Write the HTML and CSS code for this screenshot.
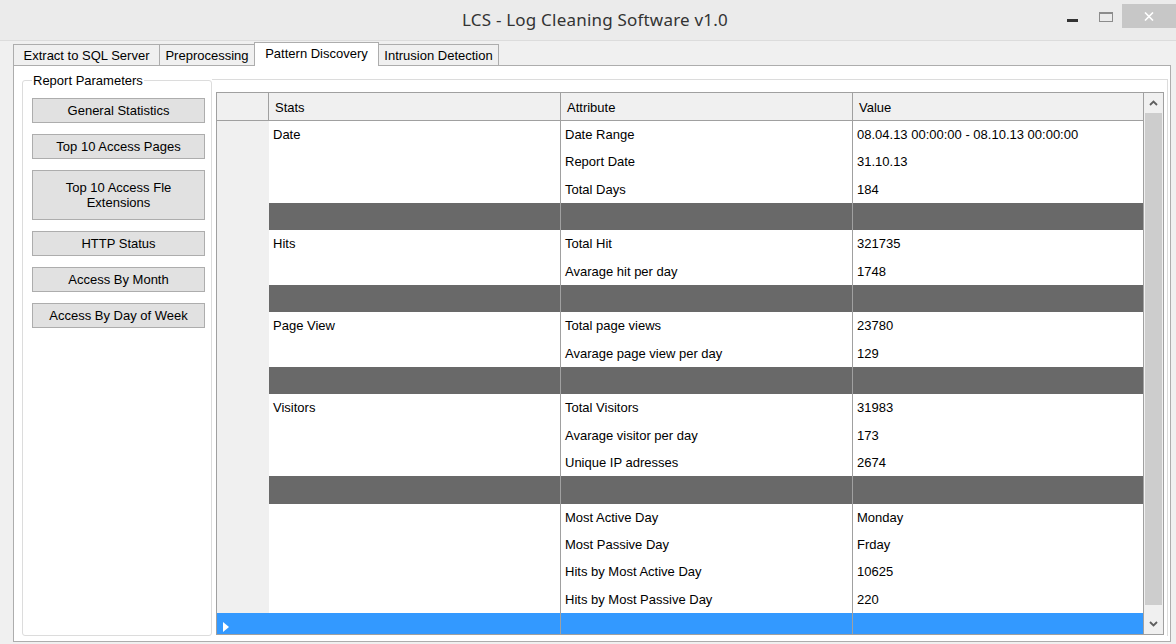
FILE: index.html
```html
<!DOCTYPE html>
<html lang="en">
<head>
<meta charset="utf-8">
<title>LCS - Log Cleaning Software v1.0</title>
<link rel="stylesheet" href="styles.css">
</head>
<body>
<div class="window">
  <header class="titlebar">
    <div class="title">LCS - Log Cleaning Software v1.0</div>
    <div class="controls">
      <span class="ctl-min"></span>
      <span class="ctl-max"></span>
      <span class="ctl-close">
        <svg width="10" height="9" viewBox="0 0 10 9"><path d="M1 0.5 L9 8.5 M9 0.5 L1 8.5" stroke="#fff" stroke-width="1.6" fill="none"/></svg>
      </span>
    </div>
  </header>

  <nav class="tabstrip">
    <div class="tab tab-1">Extract to SQL Server</div>
    <div class="tab tab-2">Preprocessing</div>
    <div class="tab tab-3 active">Pattern Discovery</div>
    <div class="tab tab-4">Intrusion Detection</div>
  </nav>

  <section class="tabpage">
    <fieldset class="params">
      <legend>Report Parameters</legend>
      <div class="btns">
        <button class="btn">General Statistics</button>
        <button class="btn">Top 10 Access Pages</button>
        <button class="btn tall">Top 10 Access Fle<br>Extensions</button>
        <button class="btn">HTTP Status</button>
        <button class="btn">Access By Month</button>
        <button class="btn">Access By Day of Week</button>
      </div>
    </fieldset>

    <div class="report">
      <div class="grid">
        <div class="grid-main">
          <div class="row head">
            <div class="cell rh"></div>
            <div class="cell">Stats</div>
            <div class="cell">Attribute</div>
            <div class="cell">Value</div>
          </div>

          <div class="row"><div class="cell rh"></div><div class="cell">Date</div><div class="cell">Date Range</div><div class="cell">08.04.13 00:00:00 - 08.10.13 00:00:00</div></div>
          <div class="row"><div class="cell rh"></div><div class="cell"></div><div class="cell">Report Date</div><div class="cell">31.10.13</div></div>
          <div class="row"><div class="cell rh"></div><div class="cell"></div><div class="cell">Total Days</div><div class="cell">184</div></div>
          <div class="row sep"><div class="cell rh"></div><div class="cell"></div><div class="cell"></div><div class="cell"></div></div>

          <div class="row"><div class="cell rh"></div><div class="cell">Hits</div><div class="cell">Total Hit</div><div class="cell">321735</div></div>
          <div class="row"><div class="cell rh"></div><div class="cell"></div><div class="cell">Avarage hit per day</div><div class="cell">1748</div></div>
          <div class="row sep"><div class="cell rh"></div><div class="cell"></div><div class="cell"></div><div class="cell"></div></div>

          <div class="row"><div class="cell rh"></div><div class="cell">Page View</div><div class="cell">Total page views</div><div class="cell">23780</div></div>
          <div class="row"><div class="cell rh"></div><div class="cell"></div><div class="cell">Avarage page view per day</div><div class="cell">129</div></div>
          <div class="row sep"><div class="cell rh"></div><div class="cell"></div><div class="cell"></div><div class="cell"></div></div>

          <div class="row"><div class="cell rh"></div><div class="cell">Visitors</div><div class="cell">Total Visitors</div><div class="cell">31983</div></div>
          <div class="row"><div class="cell rh"></div><div class="cell"></div><div class="cell">Avarage visitor per day</div><div class="cell">173</div></div>
          <div class="row"><div class="cell rh"></div><div class="cell"></div><div class="cell">Unique IP adresses</div><div class="cell">2674</div></div>
          <div class="row sep"><div class="cell rh"></div><div class="cell"></div><div class="cell"></div><div class="cell"></div></div>

          <div class="row"><div class="cell rh"></div><div class="cell"></div><div class="cell">Most Active Day</div><div class="cell">Monday</div></div>
          <div class="row"><div class="cell rh"></div><div class="cell"></div><div class="cell">Most Passive Day</div><div class="cell">Frday</div></div>
          <div class="row"><div class="cell rh"></div><div class="cell"></div><div class="cell">Hits by Most Active Day</div><div class="cell">10625</div></div>
          <div class="row"><div class="cell rh"></div><div class="cell"></div><div class="cell">Hits by Most Passive Day</div><div class="cell">220</div></div>

          <div class="row new">
            <div class="cell rh"><svg class="marker" width="6" height="10" viewBox="0 0 6 10"><path d="M0 0 L6 5 L0 10 Z" fill="#fff"/></svg></div>
            <div class="cell"></div><div class="cell"></div><div class="cell"></div>
          </div>
        </div>

        <div class="vscroll">
          <div class="sb-btn up">
            <svg width="9" height="6" viewBox="0 0 9 6"><path d="M1 5 L4.5 1.5 L8 5" stroke="#5f5f5f" stroke-width="1.8" fill="none"/></svg>
          </div>
          <div class="sb-thumb"></div>
          <div class="sb-btn down">
            <svg width="9" height="6" viewBox="0 0 9 6"><path d="M1 1 L4.5 4.5 L8 1" stroke="#5f5f5f" stroke-width="1.8" fill="none"/></svg>
          </div>
        </div>
      </div>
    </div>
  </section>
</div>
</body>
</html>
```

FILE: styles.css
```css
* {
  box-sizing: border-box;
}

html,
body {
  margin: 0;
}

body {
  width: 1176px;
  height: 644px;
  overflow: hidden;
  background: #f0f0f0;
  font: 13px/15px "Liberation Sans", Arial, sans-serif;
  color: #000;
}

/* ---------- window caption ---------- */
.titlebar {
  height: 41px;
  display: grid;
  grid-template-columns: 109px 1fr 109px;
  background: #ebebeb;
  border-bottom: 1px solid #dcdcdc;
}

.title {
  grid-column: 2;
  align-self: center;
  text-align: center;
  padding-left: 14px;
  font: 17px/22px "Noto Sans", "Open Sans", sans-serif;
  letter-spacing: 0.2px;
  color: #333;
}

.controls {
  grid-column: 3;
  display: flex;
  align-items: flex-start;
}

.ctl-min {
  width: 11px;
  height: 3px;
  margin-top: 19px;
  background: #333;
}

.ctl-max {
  width: 14px;
  height: 10px;
  margin: 12px 9px 0 21px;
  border: 1px solid #8c8c8c;
  border-top-width: 2px;
}

.ctl-close {
  width: 54px;
  height: 24px;
  margin-top: 4px;
  background: #c7c7c7;
  display: flex;
  align-items: center;
  justify-content: center;
}

/* ---------- tabs ---------- */
.tabstrip {
  height: 24px;
  display: flex;
  align-items: flex-end;
  padding-left: 13px;
}

.tab {
  height: 21px;
  padding-top: 1px;
  line-height: 19px;
  text-align: center;
  white-space: nowrap;
  background: #f0f0f0;
  border: 1px solid #adadad;
  border-bottom: 0;
}

.tab-1 { width: 147px; }
.tab-2 { width: 96px; margin-left: -1px; }
.tab-3 { width: 125px; margin-left: -1px; }
.tab-4 { width: 121px; margin-left: -1px; }

.tab.active {
  position: relative;
  z-index: 1;
  height: 24px;
  margin-bottom: -1px;
  line-height: 20px;
  background: #fff;
}

.tabpage {
  width: 1158px;
  height: 577px;
  margin-left: 13px;
  display: flex;
  padding: 7px 2px 5px 8px;
  background: #fff;
  border: 1px solid #adadad;
}

/* ---------- report parameter buttons ---------- */
.params {
  width: 190px;
  min-width: 0;
  margin: 0;
  padding: 0 0 0 9px;
  border: 1px solid #dcdcdc;
  border-radius: 3px;
}

.params legend {
  padding: 0 1px;
  line-height: 15px;
}

.btns {
  display: flex;
  flex-direction: column;
  gap: 11px;
  margin-top: 10px;
}

.btn {
  width: 173px;
  height: 25px;
  padding: 0;
  display: flex;
  align-items: center;
  justify-content: center;
  text-align: center;
  font: inherit;
  line-height: 15px;
  color: #000;
  background: #e1e1e1;
  border: 1px solid #adadad;
  border-radius: 0;
}

.btn.tall {
  height: 50px;
}

/* ---------- statistics grid ---------- */
.report {
  flex: 1;
  margin-top: 6px;
  padding: 12px 3px 0 4px;
  border-top: 1px solid #dcdcdc;
  border-right: 1px solid #dcdcdc;
}

.grid {
  height: 543px;
  display: flex;
  border: 1px solid #a0a0a0;
}

.grid-main {
  width: 927px;
  overflow: hidden;
}

.row {
  height: 27.333px;
  display: grid;
  grid-template-columns: 52px 292px 292px 291px;
}

.cell {
  display: flex;
  align-items: center;
  padding-left: 4px;
  white-space: nowrap;
  overflow: hidden;
  border-right: 1px solid #a0a0a0;
}

.cell.rh {
  background: #f0f0f0;
  border-right: 0;
}

.row.head {
  height: 28px;
  border-bottom: 1px solid #a0a0a0;
}

.row.head .cell {
  padding: 2px 0 0 6px;
  background: #f0f0f0;
}

.row.head .cell.rh {
  border-right: 1px solid #a0a0a0;
}

.row.sep .cell:not(.rh) {
  background: #696969;
}

.row.new .cell {
  background: #3399ff;
}

.marker {
  margin-left: 2px;
}

/* ---------- vertical scrollbar ---------- */
.vscroll {
  width: 19px;
  display: flex;
  flex-direction: column;
  background: #f0f0f0;
}

.sb-btn {
  height: 20px;
  display: flex;
  align-items: center;
  justify-content: center;
}

.sb-btn.down {
  height: 21px;
}

.sb-thumb {
  height: 492px;
  margin: 0 1px 8px;
  background: #cdcdcd;
}
```
